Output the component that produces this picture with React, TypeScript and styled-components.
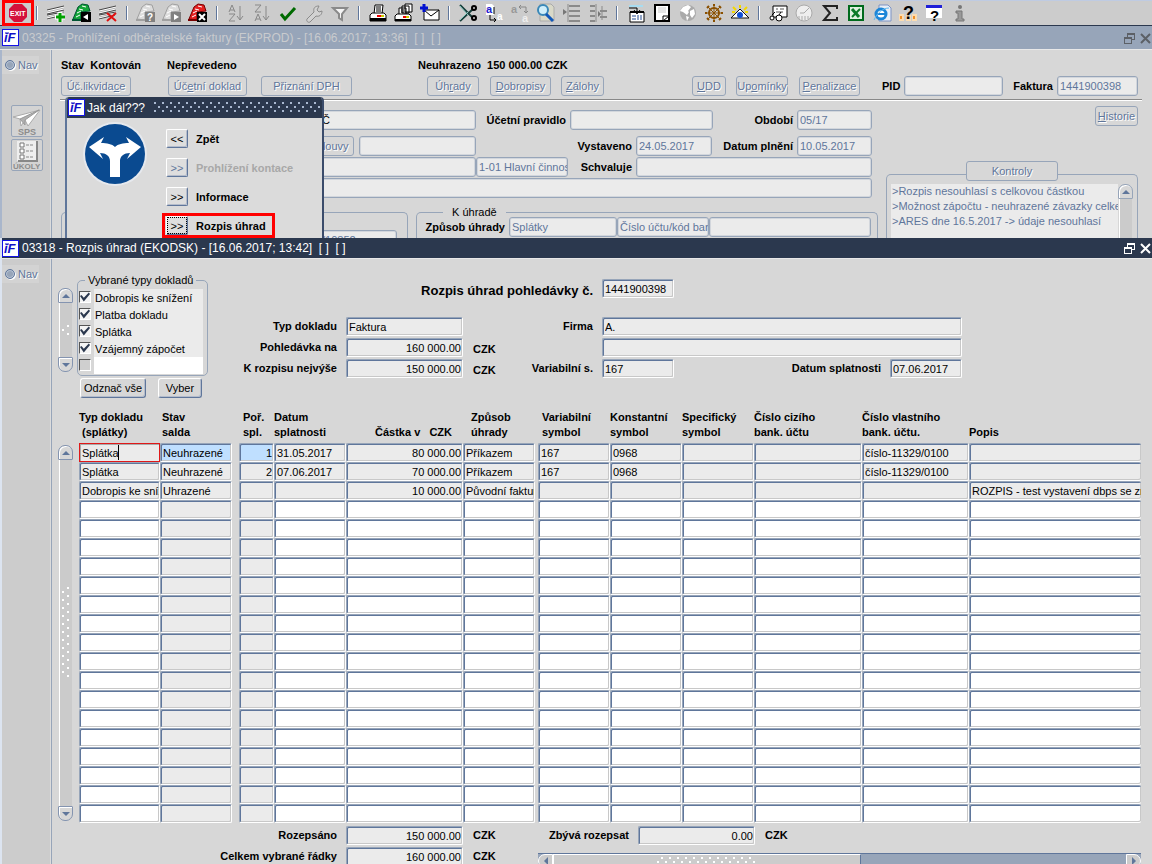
import React from "react";
import styled, { createGlobalStyle, css } from "styled-components";

const c = {
  face: "#d7d7d7",
  bar: "#cccccc",
  field: "#ebebeb",
  blue: "#97a5b9",
  steel: "#5f769b",
  navy: "#2b384e",
  current: "#bfdfff",
};

const Global = createGlobalStyle`
  *, *::before, *::after { box-sizing: border-box; }
  body { margin: 0; background: ${c.face}; overflow: hidden; }
  body, button, input, legend, table { font-family: "Liberation Sans", Arial, sans-serif; font-size: 11px; line-height: 14px; color: #000; }
`;

const Desktop = styled.div`
  display: flex;
  flex-direction: column;
  height: 100vh;
  overflow: hidden;
`;

/* ---------- toolbar ---------- */

const Toolbar = styled.div`
  display: flex;
  align-items: center;
  flex: none;
  height: 26px;
  padding-left: 2px;
  background: ${c.bar};
  border-top: 1px solid #bfcbe2;
  border-bottom: 1px solid ${c.navy};
`;
const Tool = styled.button`
  display: flex;
  justify-content: center;
  align-items: center;
  flex: none;
  width: 26px;
  height: 24px;
  padding: 0;
  border: 0;
  background: none;
`;
const ExitTool = styled(Tool)`
  position: relative;
  width: 32px;
  height: 26px;
  margin-right: -3px;
  border: 3px solid #f00;
`;
const Separator = styled.span`
  flex: none;
  width: 2px;
  height: 14px;
  margin: 0 5px;
  border-left: 1px solid ${c.steel};
  border-right: 1px solid #fff;
`;
const Glyph = styled.svg`
  display: block;
  flex: none;
`;
const GlyphText = styled.text<{ $size: number }>`
  font: bold ${(p) => p.$size}px "Liberation Sans", Arial, sans-serif;
`;

const docs = (fill: string, edge: string) => (
  <>
    <path d="M1 16L6 4l4-3 6 1 2 6-9 1v8z" fill={fill} stroke={edge} />
    <path d="M10 3l4 1M7 6l4 1M5 10l4-2M4 14l4-2" stroke="#fff" fill="none" />
    <path d="M0 17h9" stroke={edge} strokeWidth="2" />
  </>
);
const sheetRows = (
  <>
    <path d="M1 7l17-4v4L1 11zM1 13l17-5v3L1 17z" fill="#fff" />
    <path d="M1 7l17-4M1 11l17-4M1 12l17-3M1 16l16-4" stroke="#444" fill="none" />
    <path d="M1 9l17-4M1 14l17-4" stroke="#b0b0b0" fill="none" />
  </>
);

const icons: Record<string, React.ReactNode> = {
  "Nový řádek": (
    <>
      {sheetRows}
      <path d="M14 9v10M9 14h10" stroke="#fff" strokeWidth="5" />
      <path d="M14 10v9M10 14h9" stroke="#00a000" strokeWidth="3" />
    </>
  ),
  "Vložit záznam": (
    <>
      {docs("#13a538", "#053")}
      <path d="M9 9h10v10H9z" fill="#000" />
      <path d="M16 11v6l-5-3z" fill="#fff" />
    </>
  ),
  "Smazat řádek": (
    <>
      {sheetRows}
      <path d="M9 10l9 8M18 10l-9 8" stroke="#e01010" strokeWidth="2" />
    </>
  ),
  "Zadat dotaz": (
    <>
      {docs("#dcdcdc", "#a0a0a0")}
      <path d="M9 9h10v10H9z" fill="#808080" />
      <GlyphText $size={10} x="11" y="18" fill="#fff">?</GlyphText>
    </>
  ),
  "Provést dotaz": (
    <>
      {docs("#dcdcdc", "#a0a0a0")}
      <path d="M9 9h10v10H9z" fill="#808080" />
      <path d="M12 11v6l5-3z" fill="#fff" />
    </>
  ),
  "Zrušit dotaz": (
    <>
      {docs("#e42020", "#700")}
      <path d="M9 9h10v10H9z" fill="#000" />
      <path d="M11 11l6 6M17 11l-6 6" stroke="#fff" strokeWidth="2" />
    </>
  ),
  "Třídit vzestupně": (
    <>
      <path d="M3 9l3-7 3 7M4 7h4M3 11h6l-6 7h6" stroke="#888" fill="none" />
      <path d="M14 3v14M11 13l3 4 3-4" stroke="#888" fill="none" />
    </>
  ),
  "Třídit sestupně": (
    <>
      <path d="M3 2h6L3 9h6M3 18l3-7 3 7M4 16h4" stroke="#888" fill="none" />
      <path d="M14 3v14M11 13l3 4 3-4" stroke="#888" fill="none" />
    </>
  ),
  Potvrdit: <path d="M3 11l4 5L17 5" stroke="#006a00" strokeWidth="3" fill="none" />,
  Nastavení: (
    <path d="M3 16l7-7c-1-4 1-6 5-6l-2 4 2 2 3-1c0 4-3 6-6 5l-6 6c-2 1-4-1-3-3z" stroke="#8a8a8a" fill="#d2d2d2" />
  ),
  Filtr: <path d="M3 5h14l-5 6v6l-3-2v-4z" stroke="#8a8a8a" strokeWidth="2" fill="#f4f4f4" />,
  Tisk: (
    <>
      <path d="M6 11l1-9h8l-1 9" fill="#fff" stroke="#000" />
      <path d="M8 4h5M8 6h5M8 8h5" stroke="#000" />
      <path d="M2 12l2-2h12l2 2v6H2z" fill="#fff" stroke="#000" />
      <path d="M2 15h16v3H2z" fill="#000" />
      <path d="M9 13h4" stroke="#e00" strokeWidth="2" />
      <path d="M13 13h3" stroke="#cc0" strokeWidth="2" />
    </>
  ),
  "Tisk sestav": (
    <>
      <path d="M11 9V1h7v8zM8 10V3h7v7zM5 11V5h7v6" fill="#fff" stroke="#000" />
      <path d="M7 7h3M7 9h3" stroke="#000" />
      <path d="M1 13l2-2h12l2 2v5H1z" fill="#fff" stroke="#000" />
      <path d="M1 16h16v2H1z" fill="#000" />
      <path d="M9 14h3" stroke="#e00" strokeWidth="2" />
      <path d="M12 14h3" stroke="#cc0" strokeWidth="2" />
    </>
  ),
  Pošta: (
    <>
      <path d="M4 7h15v10H4z" fill="#fff" stroke="#000" />
      <path d="M4 7l7 6 8-6" fill="none" stroke="#000" />
      <path d="M4 1v8M0 5h8" stroke="#0010d0" strokeWidth="3" />
    </>
  ),
  Vyjmout: (
    <>
      <path d="M2 2l12 12M2 18L15 6" stroke="#18403c" strokeWidth="2" />
      <path d="M2 3l8 9M2 17l8-8" stroke="#8cc8c0" />
      <circle cx="16" cy="5" r="2" fill="none" stroke="#000" strokeWidth="2" />
      <circle cx="16" cy="15" r="2" fill="none" stroke="#000" strokeWidth="2" />
    </>
  ),
  Kopírovat: (
    <>
      <path d="M2 1h6l2 2v9H2z" fill="#fff" />
      <GlyphText $size={11} x="2" y="10" fill="#2020d0">a</GlyphText>
      <path d="M6 12v5h6m-2-2l2 2-2 2M10 4v7" fill="none" stroke="#000" />
      <GlyphText $size={10} x="13" y="17" fill="#fff">a</GlyphText>
    </>
  ),
  Vložit: (
    <>
      <GlyphText $size={11} x="1" y="10" fill="#999">a</GlyphText>
      <path d="M9 4h7v6m-2-2l2 2 2-2M11 2L9 4l2 2" fill="none" stroke="#888" />
      <GlyphText $size={11} x="12" y="19" fill="#eee">a</GlyphText>
    </>
  ),
  Náhled: (
    <>
      <path d="M4 1h11l3 3v14H4z" fill="#d9d9c8" stroke="#aaa" />
      <circle cx="7" cy="7" r="5" fill="#cfeefa" stroke="#3a88b8" strokeWidth="2" />
      <path d="M10 11l7 7" stroke="#1058b8" strokeWidth="3" />
    </>
  ),
  "Odsadit vpravo": (
    <>
      <path d="M7 3h11M7 8h11M7 13h11M7 18h11" stroke="#8a8a8a" strokeWidth="2" />
      <path d="M1 6l4 3-4 3z" fill="#777" />
      <path d="M6 1v18" stroke="#8a8a8a" />
    </>
  ),
  "Odsadit obojí": (
    <>
      <path d="M2 3h5M2 8h5M2 13h5M2 18h5M12 8h7M12 14h7" stroke="#8a8a8a" strokeWidth="2" />
      <path d="M8 1v18M14 3v14" stroke="#8a8a8a" />
      <path d="M10 8l3 3-3 3z" fill="#777" />
    </>
  ),
  "Přenést údaj": (
    <>
      <path d="M3 2h14v2H3z" fill="#a8dcf0" />
      <path d="M4 9h14v10H4z" fill="#fff" stroke="#000" />
      <path d="M4 9h14" stroke="#000" strokeWidth="2" />
      <path d="M3 5h8v5M8 7l3 4 3-4" stroke="#000" fill="none" />
      <path d="M6 13h4M6 16h4M12 12v5M15 12v5" stroke="#224a90" />
    </>
  ),
  Poznámka: (
    <>
      <path d="M3 2h14v16H3z" fill="#fff" stroke="#000" strokeWidth="2" />
      <path d="M6 5h8M6 7h8M6 9h8" stroke="#ccc" />
      <path d="M11 18v-5h6z" fill="#fff" stroke="#000" />
    </>
  ),
  Svět: (
    <>
      <circle cx="10" cy="10" r="8" fill="#aaa" />
      <path d="M5 4l5-2 3 2-3 4 1 1-2 3-4-3-3-1zM12 8l4-2 1 5-3 4-2-3zM8 13l3 1-2 4z" fill="#fff" />
    </>
  ),
  Kormidlo: (
    <>
      <circle cx="10" cy="10" r="5" fill="none" stroke="#8a5000" strokeWidth="2" />
      <path d="M2 10h16M10 2v16M4 4l12 12M16 4L4 16" stroke="#8a5000" />
      <path d="M1 10h2M17 10h2M10 1v2M10 17v2M3 5l2-2M15 17l2-2M3 15l2 2M15 3l2 2" stroke="#8a5000" strokeWidth="2" />
    </>
  ),
  Dohled: (
    <>
      <path d="M1 15h18l-9-9z" fill="#fff" stroke="#111" />
      <circle cx="10" cy="12" r="3" fill="#1050d8" />
      <path d="M3 4l3 3M17 4l-3 3M10 2v3M2 9h3M15 9h3" stroke="#f4d800" strokeWidth="2" />
    </>
  ),
  Najít: (
    <>
      <path d="M5 3h14v11H5z" fill="#fff" stroke="#000" />
      <path d="M8 6h2M12 6h4M8 9h7" stroke="#555" />
      <circle cx="4" cy="15" r="2" fill="#fff" stroke="#000" />
      <circle cx="11" cy="15" r="3" fill="#fff" stroke="#000" />
      <path d="M4 12l3-3M11 12l2-3" stroke="#000" />
    </>
  ),
  Hodiny: (
    <>
      <circle cx="10" cy="10" r="8" fill="#eee" stroke="#aaa" />
      <path d="M10 10l5-5M10 10H6M5 13v3M8 13v4M11 13v4M14 13v3" stroke="#aaa" fill="none" />
    </>
  ),
  Součet: <path d="M17 6V3H4l6 7-6 7h13v-3" fill="none" stroke="#222" strokeWidth="2" />,
  Excel: (
    <>
      <path d="M3 3h14v14H3z" fill="#dff0e0" stroke="#006a1c" strokeWidth="2" />
      <path d="M6 6l7 8" stroke="#0a7a28" strokeWidth="3" />
      <path d="M14 6l-8 8" stroke="#0a7a28" strokeWidth="2" />
    </>
  ),
  Internet: (
    <>
      <path d="M7 2h9l3 3v13H7z" fill="#e8eef6" stroke="#7d93c4" />
      <circle cx="9" cy="11" r="5" fill="#fff" stroke="#1c86d8" strokeWidth="3" />
      <path d="M5 11h9" stroke="#1c86d8" strokeWidth="2" />
      <path d="M2 17C5 10 11 5 17 5" stroke="#5db8f0" fill="none" />
    </>
  ),
  "Kde použito": (
    <>
      <path d="M1 11h5v7H1zM8 12h5v6H8zM14 11h5v7h-5z" fill="#fbdcb0" />
      <path d="M2 13h2v3H2zM15 13h2v3h-2z" fill="#f09028" />
      <GlyphText $size={18} x="5" y="16" fill="#000">?</GlyphText>
    </>
  ),
  Nápověda: (
    <>
      <path d="M2 3h16v12H2z" fill="#fff" />
      <path d="M2 2h16v3H2z" fill="#2020d8" />
      <GlyphText $size={15} x="6" y="18" fill="#000">?</GlyphText>
    </>
  ),
  Informace: (
    <>
      <circle cx="10" cy="4" r="2" fill="#777" />
      <path d="M6 8h6v8h2v2H6v-2h2v-6H6z" fill="#999" stroke="#777" />
    </>
  ),
};

const toolGroups = [
  ["Nový řádek", "Vložit záznam", "Smazat řádek"],
  ["Zadat dotaz", "Provést dotaz", "Zrušit dotaz"],
  ["Třídit vzestupně", "Třídit sestupně", "Potvrdit", "Nastavení", "Filtr"],
  ["Tisk", "Tisk sestav", "Pošta"],
  ["Vyjmout", "Kopírovat", "Vložit", "Náhled", "Odsadit vpravo", "Odsadit obojí"],
  ["Přenést údaj", "Poznámka", "Svět", "Kormidlo", "Dohled"],
  ["Najít", "Hodiny", "Součet", "Excel", "Internet", "Kde použito", "Nápověda", "Informace"],
];

/* ---------- window frame ---------- */

const TitleBar = styled.div<{ $active?: boolean }>`
  display: flex;
  align-items: center;
  flex: none;
  gap: 2px;
  height: ${(p) => (p.$active ? 20 : 23)}px;
  padding: 0 0 0 ${(p) => (p.$active ? 0 : 2)}px;
  font-size: 12px;
  line-height: 16px;
  white-space: pre;
  color: ${(p) => (p.$active ? "#fff" : "#c9cbce")};
  background: ${(p) => (p.$active ? c.navy : c.blue)};
  --control: ${(p) => (p.$active ? "#fff" : "#5c6066")};
`;
const TitleText = styled.span`
  flex: 1;
  padding-left: 1px;
`;
const WindowButton = styled.button`
  width: 14px;
  height: 14px;
  padding: 1px;
  border: 0;
  background: none;
  color: var(--control);
`;
const LogoText = styled(GlyphText)`
  font-style: italic;
  fill: #1010c8;
`;

const Logo = () => (
  <Glyph width="17" height="17" viewBox="0 0 17 17" aria-hidden>
    <path d="M0 0h17v17H0z" fill="#fff" stroke="#1414e6" strokeWidth="2" />
    <LogoText $size={13} x="2" y="13">iF</LogoText>
    <path d="M3 4h4" stroke="#1010c8" />
  </Glyph>
);

const WindowButtons = () => (
  <>
    <WindowButton aria-label="Obnovit">
      <Glyph width="12" height="12" viewBox="0 0 12 12" fill="none" stroke="currentColor" shapeRendering="crispEdges">
        <path d="M4 5V1h7v6H8M4 2h7M1 5h7v6H1zM1 6h7" />
      </Glyph>
    </WindowButton>
    <WindowButton aria-label="Zavřít">
      <Glyph width="12" height="12" viewBox="0 0 12 12" fill="none" stroke="currentColor" strokeWidth="2">
        <path d="M2 2l9 9M11 2l-9 9" />
      </Glyph>
    </WindowButton>
  </>
);

const Window = styled.section<{ $front?: boolean }>`
  position: relative;
  display: flex;
  flex-direction: column;
  flex: ${(p) => (p.$front ? "1 1 0" : "0 0 212px")};
  min-height: 0;
  overflow: hidden;
  border-left: ${(p) => (p.$front ? "2px solid #dce4f0" : "0")};
  background: ${c.face};
`;
const Body = styled.div`
  display: flex;
  flex: 1;
  min-height: 0;
  border-top: 1px solid #e8e8e8;
`;
const Nav = styled.nav<{ $front?: boolean }>`
  display: flex;
  flex-direction: column;
  align-items: center;
  gap: 2px;
  flex: none;
  width: ${(p) => (p.$front ? 50 : 52)}px;
  padding-top: 6px;
  background: ${c.bar};
  border-left: ${(p) => (p.$front ? "0" : "2px solid #a9b6cb")};
  border-right: 1px solid ${c.blue};
  box-shadow: inset -1px 0 #dcdcdc;
`;
const NavOption = styled.label`
  display: flex;
  align-items: center;
  align-self: flex-start;
  gap: 3px;
  height: 18px;
  padding: 0 1px 0 3px;
  color: ${c.steel};
  background: #d3d3d3;
  text-shadow: 1px 1px #fff;
`;
const Radio = styled.input`
  appearance: none;
  width: 10px;
  height: 10px;
  margin: 0;
  border: 1px solid ${c.steel};
  border-radius: 50%;
  background: ${c.blue};
  box-shadow: inset 0 0 0 1px #b9c5d6, 1px 1px #fff;
`;
const NavButton = styled.button`
  width: 32px;
  height: 32px;
  padding: 0;
  border: 1px solid ${c.blue};
  border-radius: 2px;
  background: #d3d3d3;
`;
const NavSpace = styled.div`
  height: 27px;
`;
const NavCaption = styled.text<{ $size: number }>`
  font: bold ${(p) => p.$size}px "Liberation Sans", Arial, sans-serif;
  fill: #8c8c8c;
`;

/* ---------- shared controls ---------- */

const raised = css`
  border: 1px solid;
  border-color: #fff ${c.steel} ${c.steel} #fff;
  box-shadow: inset -1px -1px #b4bccb;
`;
const Button = styled.button<{ $w: number; $dim?: boolean }>`
  width: ${(p) => p.$w}px;
  height: 20px;
  padding: 0;
  border-radius: 3px;
  background: ${c.face};
  white-space: nowrap;
  ${(p) =>
    p.$dim
      ? css`
          border: 1px solid ${c.blue};
          color: ${c.steel};
          text-shadow: 1px 1px #fff;
        `
      : raised}
`;
const DimInput = styled.input`
  width: 100%;
  min-width: 0;
  height: 20px;
  padding: 0 0 0 2px;
  border: 1px solid ${c.blue};
  border-radius: 3px;
  outline: 0;
  background: ${c.field};
  box-shadow: inset 0 0 0 1px #d2d6dc;
  color: ${c.steel};
`;
const PartnerInput = styled(DimInput)`
  padding: 0 145px 0 0;
  text-align: right;
  color: #000;
`;
const SunkInput = styled.input<{ $right?: boolean; $blank?: boolean; $current?: boolean; $focus?: boolean }>`
  display: block;
  width: 100%;
  min-width: 0;
  height: 19px;
  padding: 0 ${(p) => (p.$right ? 1 : 0)}px 0 2px;
  border: 1px solid;
  border-color: ${c.blue} #fff #fff ${c.blue};
  border-radius: 2px;
  outline: 0;
  box-shadow: inset 1px 1px ${c.steel}, inset -1px -1px #c8c8c8;
  text-align: ${(p) => (p.$right ? "right" : "left")};
  background: ${(p) => (p.$current ? c.current : p.$blank ? "#fff" : c.field)};
  ${(p) =>
    p.$focus &&
    css`
      border-color: #e01818;
      border-radius: 0;
      box-shadow: inset 1px 1px #aaa;
    `}
`;
const Label = styled.label`
  font-weight: bold;
  white-space: nowrap;
  text-align: right;
`;

/* ---------- invoice form ---------- */

const Form = styled.div`
  flex: 1;
  min-width: 0;
  padding: 7px 14px 0 9px;
`;
const Row = styled.div<{ $cols: string; $below?: number }>`
  display: grid;
  grid-template-columns: ${(p) => p.$cols};
  align-items: center;
  margin-bottom: ${(p) => p.$below || 0}px;
  > label { padding-right: 4px; }
`;
const Status = styled(Row)`
  height: 15px;
  font-weight: bold;
  white-space: pre;
`;
const Rule = styled.hr`
  height: 2px;
  margin: 0 -4px 0 -1px;
  border: 0;
  border-top: 1px solid #888;
  border-bottom: 1px solid #fff;
`;
const Columns = styled.div`
  display: grid;
  grid-template-columns: minmax(0, 1fr) 252px;
  column-gap: 8px;
`;
const Fields = styled.div`
  padding-top: 9px;
  > div { margin-right: 6px; margin-left: 20px; }
`;
const Groups = styled.section`
  display: grid;
  grid-template-columns: 347px minmax(0, 1fr);
  gap: 8px;
  padding-top: 9px;
`;
const Group = styled.fieldset<{ $top?: number }>`
  min-width: 0;
  margin: 0;
  padding: ${(p) => p.$top || 0}px 6px 0 4px;
  border: 1px solid ${c.blue};
  border-bottom: 0;
  border-radius: 5px 5px 0 0;
`;
const Legend = styled.legend`
  margin-left: 22px;
  padding: 0 9px;
  line-height: 10px;
`;
const Side = styled.div`
  display: flex;
  flex-direction: column;
  padding-top: 5px;
`;
const SideTop = styled.div`
  display: flex;
  justify-content: flex-end;
  height: 68px;
`;
const Checks = styled.div`
  display: flex;
  flex-direction: column;
  align-items: center;
  gap: 3px;
  padding: 0 4px;
  border: 1px solid ${c.blue};
  border-bottom: 0;
  border-radius: 5px 5px 0 0;
  > button { margin-top: -14px; }
`;
const CheckList = styled.div`
  display: flex;
  width: 100%;
  height: 84px;
`;
const Messages = styled.div`
  flex: 1;
  overflow: hidden;
  padding: 0 1px;
  background: ${c.field};
  color: ${c.steel};
  line-height: 15px;
  white-space: nowrap;
`;

/* ---------- scroll bars ---------- */

const Scroll = styled.div<{ $h?: number; $dim?: boolean }>`
  display: flex;
  flex-direction: column;
  flex: none;
  width: 15px;
  height: ${(p) => (p.$h ? `${p.$h}px` : "auto")};
  --edge: ${(p) => (p.$dim ? c.blue : "#8494b0")};
`;
const ScrollButton = styled.button<{ $down?: boolean }>`
  display: grid;
  place-items: center;
  flex: none;
  height: 15px;
  padding: 0;
  border: 1px solid var(--edge);
  border-radius: ${(p) => (p.$down ? "1px 1px 7px 7px" : "7px 7px 1px 1px")};
  background: ${c.face};
  box-shadow: inset 1px 1px #fff;
  &::before {
    content: "";
    border: 4px solid transparent;
    border-top-width: ${(p) => (p.$down ? 4 : 0)}px;
    border-bottom-width: ${(p) => (p.$down ? 0 : 4)}px;
    border-top-color: ${c.steel};
    border-bottom-color: ${c.steel};
  }
`;
const Track = styled.div<{ $grip?: number }>`
  display: grid;
  place-items: center;
  flex: 1;
  margin: 0 1px;
  background: #cbcbcb;
  border-left: 1px solid #fff;
  &::before {
    content: "";
    width: 8px;
    height: ${(p) => p.$grip || 0}px;
    background: radial-gradient(circle at 1px 1px, #fff 1px, transparent 1px) 0 4px / 8px 8px,
      radial-gradient(circle at 1px 1px, #fff 1px, transparent 1px) 5px 0 / 8px 8px;
  }
`;
const VScroll = ({ h, grip, dim }: { h?: number; grip?: number; dim?: boolean }) => (
  <Scroll $h={h} $dim={dim}>
    <ScrollButton aria-label="Nahoru" />
    <Track $grip={grip} />
    <ScrollButton $down aria-label="Dolů" />
  </Scroll>
);

const HBar = styled.div`
  display: flex;
  height: 15px;
  background: ${c.blue};
  border-top: 1px solid ${c.steel};
`;
const HButton = styled.button<{ $right?: boolean }>`
  display: grid;
  place-items: center;
  width: 15px;
  padding: 0;
  border: 1px solid #fff;
  border-radius: ${(p) => (p.$right ? "0 7px 7px 0" : "7px 0 0 7px")};
  background: ${c.bar};
  &::before {
    content: "";
    border: 4px solid transparent;
    border-left: ${(p) => (p.$right ? `4px solid ${c.steel}` : "0")};
    border-right: ${(p) => (p.$right ? "0" : `4px solid ${c.steel}`)};
  }
`;
const HThumb = styled.div`
  display: grid;
  place-items: center;
  width: 51%;
  border: 1px solid #fff;
  border-right-color: ${c.steel};
  background: ${c.bar};
  &::before {
    content: "";
    width: 100px;
    height: 9px;
    background: radial-gradient(circle at 1px 1px, #fff 1px, transparent 1px) 0 4px / 8px 8px,
      radial-gradient(circle at 1px 1px, #fff 1px, transparent 1px) 4px 0 / 8px 8px;
  }
`;
const HRest = styled.div`
  flex: 1;
`;

/* ---------- "Jak dál???" dialog ---------- */

const Dialog = styled.div`
  position: absolute;
  top: 71px;
  left: 65px;
  width: 259px;
  border: 2px solid ${c.steel};
  border-top: 0;
  border-right-color: #3b4c6b;
  border-radius: 4px 4px 0 0;
  background: #dbdbdb;
  overflow: hidden;
`;
const DialogTitle = styled(TitleBar)`
  height: 21px;
  padding: 0 1px;
`;
const Dots = styled.span`
  flex: 1;
  height: 11px;
  margin-left: 7px;
  background: radial-gradient(circle at 1px 1px, #a9b8d0 1px, transparent 1px) 0 0 / 8px 8px,
    radial-gradient(circle at 1px 1px, #a9b8d0 1px, transparent 1px) 4px 4px / 8px 8px;
`;
const DialogBody = styled.div`
  display: grid;
  grid-template-columns: 66px 1fr;
  column-gap: 18px;
  padding: 3px 4px 8px 15px;
`;
const Choices = styled.div`
  display: flex;
  flex-direction: column;
  align-items: flex-start;
  gap: 4px;
  padding-top: 5px;
`;
const Choice = styled.label<{ $off?: boolean; $hot?: boolean }>`
  display: flex;
  align-items: center;
  gap: 8px;
  height: 25px;
  margin-left: -4px;
  padding: 0 6px 0 1px;
  border: 3px solid ${(p) => (p.$hot ? "#f00" : "transparent")};
  font-weight: bold;
  white-space: nowrap;
  color: ${(p) => (p.$off ? "#a8a8a8" : "#000")};
`;
const Arrow = styled.button<{ $off?: boolean; $hot?: boolean }>`
  width: 22px;
  height: 19px;
  padding: 0;
  border-radius: 2px;
  background: #dedede;
  ${raised}
  color: ${(p) => (p.$off ? c.steel : "#000")};
  ${(p) => p.$hot && css`outline: 1px dotted #000; outline-offset: -2px;`}
`;

/* ---------- payment schedule ---------- */

const Main = styled.div`
  flex: 1;
  min-width: 0;
  padding: 16px 11px 0 6px;
`;
const Head = styled.div`
  display: flex;
`;
const ScrollBeside = styled.div`
  padding: 13px 4px 0 0;
`;
const Picker = styled.div`
  width: 131px;
`;
const TypeGroup = styled.fieldset`
  margin: 0;
  padding: 4px 4px 1px 1px;
  border: 1px solid ${c.blue};
  border-radius: 5px;
`;
const TypeLegend = styled.legend`
  margin-left: 6px;
  padding: 0 3px;
  line-height: 10px;
`;
const TypeRow = styled.div`
  display: grid;
  grid-template-columns: 12px minmax(0, 1fr);
  column-gap: 3px;
  height: 17px;
`;
const Check = styled.input`
  appearance: none;
  width: 12px;
  height: 12px;
  margin: 2px 0 0;
  border: 1px solid;
  border-color: #555 #fff #fff #555;
  background: #cfcfcf;
  &:checked { background: #f4f4f4; }
  &:checked::before {
    content: "";
    display: block;
    width: 10px;
    height: 10px;
    background: ${c.navy};
    clip-path: polygon(0 40%, 15% 30%, 38% 58%, 88% 5%, 100% 20%, 38% 95%);
  }
`;
const TypeName = styled.label<{ $blank?: boolean }>`
  padding-left: 1px;
  line-height: 19px;
  white-space: nowrap;
  background: ${(p) => (p.$blank ? "#fff" : c.field)};
`;
const PickerButtons = styled.div`
  display: flex;
  gap: 12px;
  padding: 2px 0 0 3px;
`;
const Summary = styled.div`
  display: grid;
  grid-template-columns: 129px 117px 121px 360px;
  grid-template-rows: 36px 19px 19px 19px;
  gap: 2px 9px;
  padding-top: 4px;
`;
const Heading = styled.label`
  grid-column: 1 / 4;
  padding-top: 4px;
  font-size: 13px;
  line-height: 16px;
  font-weight: bold;
  text-align: right;
`;
const SummaryLabel = styled(Label)`
  line-height: 19px;
`;
const Between = styled.div`
  display: flex;
  justify-content: space-between;
  font-weight: bold;
  line-height: 19px;
`;
const Currency = styled.b`
  padding: 2px 0 0 1px;
`;
const Short = styled.div`
  width: 72px;
`;
const DueRow = styled.div`
  display: grid;
  grid-template-columns: 72px 1fr 72px;
  gap: 9px;
`;
const Sheet = styled.div`
  display: flex;
  gap: 6px;
  padding-top: 11px;
`;
const SheetScroll = styled.div`
  display: flex;
  padding: 36px 0 2px;
`;
const Grid = styled.table`
  flex: 1;
  width: 100%;
  table-layout: fixed;
  border-collapse: collapse;
`;
const Col = styled.col<{ $w?: number }>`
  width: ${(p) => (p.$w ? `${p.$w}px` : "auto")};
`;
const Th = styled.th<{ $pad?: number }>`
  height: 34px;
  padding: 0 0 3px ${(p) => p.$pad || 0}px;
  vertical-align: bottom;
  text-align: left;
  line-height: 15px;
  white-space: pre;
`;
const Td = styled.td<{ $gap?: number; $cut?: boolean }>`
  position: relative;
  height: 19px;
  padding: 0 ${(p) => p.$gap || 0}px 0 0;
  ${(p) => p.$cut && css`input { border-right: 0; }`}
`;
const Caret = styled.span`
  position: absolute;
  top: 2px;
  left: 39px;
  width: 1px;
  height: 15px;
  background: #000;
`;
const Totals = styled.div`
  display: grid;
  grid-template-columns: 129px 117px 49px 99px 117px minmax(0, 1fr);
  gap: 2px 9px;
  padding: 3px 0 0 150px;
`;
const TotalsScroll = styled.div`
  grid-column: 4 / -1;
  padding: 6px 0 0 8px;
`;

type ColumnDef = { name: string; title: string; w?: number; pad?: number; gap?: number; right?: boolean; gray?: boolean };
const columns: ColumnDef[] = [
  { name: "Typ dokladu", title: "Typ dokladu\n (splátky)", w: 81 },
  { name: "Stav salda", title: "Stav\nsalda", w: 79, pad: 2, gap: 7, gray: true },
  { name: "Pořadí splátky", title: "Poř.\nspl.", w: 35, pad: 4, right: true, gray: true },
  { name: "Datum splatnosti", title: "Datum\nsplatnosti", w: 72 },
  { name: "Částka v CZK", title: "Částka v   CZK", w: 117, pad: 29, right: true },
  { name: "Způsob úhrady", title: "Způsob\núhrady", w: 75, pad: 8, gap: 3 },
  { name: "Variabilní symbol", title: "Variabilní\nsymbol", w: 72, pad: 4 },
  { name: "Konstantní symbol", title: "Konstantní\nsymbol", w: 72 },
  { name: "Specifický symbol", title: "Specifický\nsymbol", w: 72 },
  { name: "Číslo cizího bankovního účtu", title: "Číslo cizího\nbank. účtu", w: 108 },
  { name: "Číslo vlastního bankovního účtu", title: "Číslo vlastního\nbank. účtu.", w: 107 },
  { name: "Popis", title: "Popis" },
];
const records = [
  ["Splátka", "Neuhrazené", "1", "31.05.2017", "80 000.00", "Příkazem", "167", "0968", "", "", "číslo-11329/0100", ""],
  ["Splátka", "Neuhrazené", "2", "07.06.2017", "70 000.00", "Příkazem", "167", "0968", "", "", "číslo-11329/0100", ""],
  ["Dobropis ke snížení", "Uhrazené", "", "", "10 000.00", "Původní faktura", "", "", "", "", "", "ROZPIS - test vystavení dbps se změnou"],
];
const rowCount = 20;

const types = ["Dobropis ke snížení", "Platba dokladu", "Splátka", "Vzájemný zápočet", ""];

const NavRadio = ({ name }: { name: string }) => (
  <NavOption>
    <Radio type="radio" name={name} />
    Nav
  </NavOption>
);

function InvoiceWindow() {
  return (
    <Window>
      <TitleBar>
        <Logo />
        <TitleText>03325 - Prohlížení odběratelské faktury (EKPROD) - [16.06.2017; 13:36]  [ ]  [ ]</TitleText>
        <WindowButtons />
      </TitleBar>
      <Body>
        <Nav>
          <NavRadio name="nav-back" />
          <NavSpace />
          <NavButton aria-label="SPS">
            <Glyph width="30" height="30" viewBox="0 0 30 30">
              <path d="M1 11L28 4 16 20l-3-6-4 6-1-7z" fill="#fff" stroke="#aaa" />
              <path d="M8 13L27 4 13 14v5z" fill="#b0b0b0" stroke="#999" />
              <NavCaption $size={9} x="6" y="29">SPS</NavCaption>
            </Glyph>
          </NavButton>
          <NavButton aria-label="Úkoly">
            <Glyph width="30" height="30" viewBox="0 0 30 30">
              <path d="M5 1h20v20H5z" fill="#eee" />
              <path d="M25 1v20H6" fill="none" stroke="#888" strokeWidth="2" />
              <path d="M8 3h4v4H8zM8 9h4v4H8zM8 15h4v4H8z" fill="#fff" stroke="#777" />
              <path d="M14 5h8M14 11h8M14 17h8" stroke="#888" strokeDasharray="3 1" />
              <NavCaption $size={8} x="1" y="29">ÚKOLY</NavCaption>
            </Glyph>
          </NavButton>
        </Nav>
        <Form>
          <Status $cols="106px 251px 1fr" $below={4}>
            <span>Stav  Kontován</span>
            <span>Nepřevedeno</span>
            <span>Neuhrazeno  150 000.00 CZK</span>
          </Status>
          <Row $cols="107px 93px 166px 63px 71px 1fr 44px 63px 83px 22px 99px 54px 81px" $below={3}>
            <Button $dim $w={70}>Úč.likvida<u>c</u>e</Button>
            <Button $dim $w={79}>Úč<u>e</u>tní doklad</Button>
            <Button $dim $w={91}>Přiznání DPH</Button>
            <Button $dim $w={52}>Úh<u>r</u>ady</Button>
            <Button $dim $w={61}><u>D</u>obropisy</Button>
            <Button $dim $w={43}><u>Z</u>álohy</Button>
            <Button $dim $w={34}><u>U</u>DD</Button>
            <Button $dim $w={52}>Up<u>o</u>mínky</Button>
            <Button $dim $w={61}><u>P</u>enalizace</Button>
            <Label htmlFor="pid">PID</Label>
            <DimInput id="pid" />
            <Label htmlFor="faktura">Faktura</Label>
            <DimInput id="faktura" defaultValue="1441900398" />
          </Row>
          <Rule />
          <Columns>
            <Fields>
              <Row $cols="minmax(0,1fr) 94px 143px 84px 75px" $below={6}>
                <PartnerInput aria-label="Partner" defaultValue="Č" />
                <Label htmlFor="pravidlo">Účetní pravidlo</Label>
                <DimInput id="pravidlo" />
                <Label htmlFor="obdobi">Období</Label>
                <DimInput id="obdobi" defaultValue="05/17" />
              </Row>
              <Row $cols="minmax(0,1fr) 58px 117px 160px 76px 85px 75px" $below={1}>
                <DimInput aria-label="Smlouva" />
                <Button $dim $w={53}>Smlouvy</Button>
                <DimInput aria-label="Číslo smlouvy" />
                <Label htmlFor="vystaveno">Vystaveno</Label>
                <DimInput id="vystaveno" defaultValue="24.05.2017" />
                <Label htmlFor="plneni">Datum plnění</Label>
                <DimInput id="plneni" defaultValue="10.05.2017" />
              </Row>
              <Row $cols="minmax(0,1fr) 92px 68px 236px" $below={1}>
                <DimInput aria-label="Středisko" />
                <DimInput aria-label="Činnost" defaultValue="1-01 Hlavní činnost" />
                <Label htmlFor="schvaluje">Schvaluje</Label>
                <DimInput id="schvaluje" />
              </Row>
              <Row $cols="minmax(0,1fr)">
                <DimInput aria-label="Text" />
              </Row>
              <Groups>
                <Group $top={13}>
                  <Legend>Symboly</Legend>
                  <Row $cols="253px 78px">
                    <span />
                    <DimInput aria-label="Symbol" defaultValue="/10852" />
                  </Row>
                </Group>
                <Group>
                  <Legend>K úhradě</Legend>
                  <Row $cols="88px 108px 92px minmax(0,1fr)">
                    <Label htmlFor="zpusob">Způsob úhrady</Label>
                    <DimInput id="zpusob" defaultValue="Splátky" />
                    <DimInput aria-label="Číslo účtu" defaultValue="Číslo účtu/kód banky" />
                    <DimInput aria-label="Banka" />
                  </Row>
                </Group>
              </Groups>
            </Fields>
            <Side>
              <SideTop><Button $dim $w={43}><u>H</u>istorie</Button></SideTop>
              <Checks>
                <Button $dim $w={92}>Kontroly</Button>
                <CheckList>
                  <Messages>
                    &gt;Rozpis nesouhlasí s celkovou částkou<br />
                    &gt;Možnost zápočtu - neuhrazené závazky celkem<br />
                    &gt;ARES dne 16.5.2017 -&gt; údaje nesouhlasí
                  </Messages>
                  <VScroll dim />
                </CheckList>
              </Checks>
            </Side>
          </Columns>
        </Form>
      </Body>
      <Dialog role="dialog" aria-label="Jak dál???">
        <DialogTitle $active>
          <Logo />
          Jak dál???
          <Dots />
        </DialogTitle>
        <DialogBody>
          <Glyph width="66" height="66" viewBox="0 0 66 66" aria-hidden>
            <circle cx="33" cy="33" r="32" fill="#e6e9ee" />
            <circle cx="33" cy="33" r="30" fill="#0a4a90" />
            <path
              d="M28 56V40c0-5-4-8-10-8l3 6L7 26l15-10-3 6c6 0 11 1 14 4 3-3 8-4 14-4l-3-6 15 10-14 12 3-6c-6 0-10 3-10 8v16z"
              fill="#fff"
            />
          </Glyph>
          <Choices>
            <Choice><Arrow>&lt;&lt;</Arrow>Zpět</Choice>
            <Choice $off><Arrow $off disabled>&gt;&gt;</Arrow>Prohlížení kontace</Choice>
            <Choice><Arrow>&gt;&gt;</Arrow>Informace</Choice>
            <Choice $hot><Arrow $hot>&gt;&gt;</Arrow>Rozpis úhrad</Choice>
          </Choices>
        </DialogBody>
      </Dialog>
    </Window>
  );
}

function ScheduleWindow() {
  return (
    <Window $front>
      <TitleBar $active>
        <Logo />
        <TitleText>03318 - Rozpis úhrad (EKODSK) - [16.06.2017; 13:42]  [ ]  [ ]</TitleText>
        <WindowButtons />
      </TitleBar>
      <Body>
        <Nav $front>
          <NavRadio name="nav-front" />
        </Nav>
        <Main>
          <Head>
            <ScrollBeside><VScroll h={84} grip={11} /></ScrollBeside>
            <Picker>
              <TypeGroup>
                <TypeLegend>Vybrané typy dokladů</TypeLegend>
                {types.map((t, i) => (
                  <TypeRow key={i}>
                    <Check type="checkbox" id={`typ-${i}`} defaultChecked={!!t} aria-label={t || "Prázdný řádek"} />
                    <TypeName htmlFor={`typ-${i}`} $blank={!t}>{t}</TypeName>
                  </TypeRow>
                ))}
              </TypeGroup>
              <PickerButtons>
                <Button $w={66}>Odznač vše</Button>
                <Button $w={44}>Vyber</Button>
              </PickerButtons>
            </Picker>
            <Summary>
              <Heading htmlFor="cislo">Rozpis úhrad pohledávky č.</Heading>
              <Short><SunkInput id="cislo" defaultValue="1441900398" /></Short>
              <SummaryLabel htmlFor="typ">Typ dokladu</SummaryLabel>
              <SunkInput id="typ" defaultValue="Faktura" />
              <Between><span /><label htmlFor="firma">Firma</label></Between>
              <SunkInput id="firma" defaultValue="A." />
              <SummaryLabel htmlFor="pohledavka">Pohledávka na</SummaryLabel>
              <SunkInput id="pohledavka" $right defaultValue="160 000.00" />
              <Between><Currency>CZK</Currency></Between>
              <SunkInput aria-label="Firma, druhý řádek" />
              <SummaryLabel htmlFor="nejvyse">K rozpisu nejvýše</SummaryLabel>
              <SunkInput id="nejvyse" $right defaultValue="150 000.00" />
              <Between><Currency>CZK</Currency><label htmlFor="vs">Variabilní s.</label></Between>
              <DueRow>
                <SunkInput id="vs" defaultValue="167" />
                <SummaryLabel htmlFor="splatnost">Datum splatnosti</SummaryLabel>
                <SunkInput id="splatnost" defaultValue="07.06.2017" />
              </DueRow>
            </Summary>
          </Head>
          <Sheet>
            <SheetScroll><VScroll grip={92} /></SheetScroll>
            <Grid>
              <colgroup>
                {columns.map((col) => <Col key={col.name} $w={col.w} />)}
              </colgroup>
              <thead>
                <tr>
                  {columns.map((col) => <Th key={col.name} $pad={col.pad}>{col.title}</Th>)}
                </tr>
              </thead>
              <tbody>
                {Array.from({ length: rowCount }, (_, r) => (
                  <tr key={r}>
                    {columns.map((col, i) => (
                      <Td key={col.name} $gap={col.gap} $cut={i === columns.length - 1}>
                        <SunkInput
                          aria-label={`${col.name}, řádek ${r + 1}`}
                          defaultValue={records[r]?.[i] ?? ""}
                          $right={col.right}
                          $blank={!records[r] && !col.gray}
                          $current={r === 0 && (i === 1 || i === 2)}
                          $focus={r === 0 && i === 0}
                        />
                        {r === 0 && i === 0 && <Caret />}
                      </Td>
                    ))}
                  </tr>
                ))}
              </tbody>
            </Grid>
          </Sheet>
          <Totals>
            <SummaryLabel htmlFor="rozepsano">Rozepsáno</SummaryLabel>
            <SunkInput id="rozepsano" $right defaultValue="150 000.00" />
            <Currency>CZK</Currency>
            <SummaryLabel htmlFor="zbyva">Zbývá rozepsat</SummaryLabel>
            <SunkInput id="zbyva" $right defaultValue="0.00" />
            <Currency>CZK</Currency>
            <SummaryLabel htmlFor="celkem">Celkem vybrané řádky</SummaryLabel>
            <SunkInput id="celkem" $right defaultValue="160 000.00" />
            <Currency>CZK</Currency>
            <TotalsScroll>
              <HBar>
                <HButton aria-label="Vlevo" />
                <HThumb />
                <HRest />
                <HButton $right aria-label="Vpravo" />
              </HBar>
            </TotalsScroll>
          </Totals>
        </Main>
      </Body>
    </Window>
  );
}

export default function App() {
  return (
    <Desktop>
      <Global />
      <Toolbar role="toolbar">
        <ExitTool aria-label="Konec">
          <Glyph width="20" height="20" viewBox="0 0 20 20">
            <path d="M6 1h8l5 5v8l-5 5H6l-5-5V6z" fill="#d4103c" />
            <GlyphText $size={7} x="2" y="13" fill="#fff">EXIT</GlyphText>
          </Glyph>
        </ExitTool>
        {toolGroups.map((group, g) => (
          <React.Fragment key={g}>
            <Separator />
            {group.map((name) => (
              <Tool key={name} aria-label={name} title={name}>
                <Glyph width="20" height="20" viewBox="0 0 20 20">{icons[name]}</Glyph>
              </Tool>
            ))}
          </React.Fragment>
        ))}
      </Toolbar>
      <InvoiceWindow />
      <ScheduleWindow />
    </Desktop>
  );
}
